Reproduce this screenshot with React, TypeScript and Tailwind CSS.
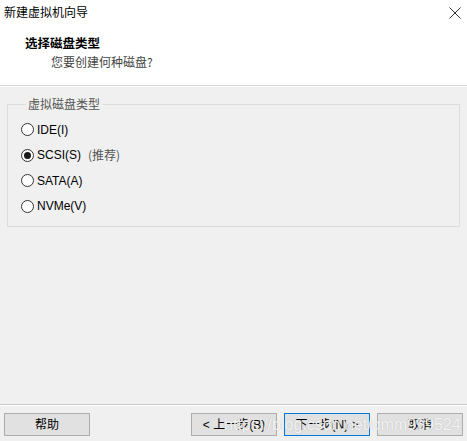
import React from "react";

const cjk = '"Noto Sans CJK SC", "Liberation Sans", sans-serif';
const latin = '"Liberation Sans", "Noto Sans CJK SC", sans-serif';

function Radio({ checked, label, hint }: { checked?: boolean; label: string; hint?: string }) {
  return (
    <div className="flex h-[25.5px] items-center">
      <span className="flex h-[13px] w-[13px] items-center justify-center rounded-full border border-[#333333] bg-white">
        {checked && <span className="h-[7px] w-[7px] rounded-full bg-[#1a1a1a]" />}
      </span>
      <span className="ml-[3px] text-[12px] text-black" style={{ fontFamily: latin }}>
        {label}
      </span>
      {hint && (
        <span className="ml-[7px] text-[12px] text-[#555555]" style={{ fontFamily: cjk }}>
          {hint}
        </span>
      )}
    </div>
  );
}

function Button({ children, primary }: { children: React.ReactNode; primary?: boolean }) {
  return (
    <button
      className={
        "flex h-[23px] w-[86px] items-center justify-center bg-[#e1e1e1] text-[12px] text-black " +
        (primary ? "border border-[#0078d7]" : "border border-[#adadad]")
      }
      style={{ fontFamily: latin }}
    >
      {children}
    </button>
  );
}

export default function App() {
  return (
    <div className="relative flex h-[441px] w-[467px] flex-col overflow-hidden bg-[#f0f0f0]" style={{ fontFamily: cjk }}>
      <div className="h-[86px] border-b border-[#d7d7d7] bg-white">
        <div className="flex h-[24px] items-center justify-between pl-[4px] pr-[6px]">
          <span className="text-[12px] leading-[16px] text-black">新建虚拟机向导</span>
          <svg width="12" height="12" viewBox="0 0 12 12" className="mt-[1px]">
            <path d="M0.5 0.5 L11.5 11.5 M11.5 0.5 L0.5 11.5" stroke="#333" strokeWidth="1" />
          </svg>
        </div>
        <div className="mt-[11px] pl-[25px] text-[12.5px] font-bold leading-[15px] text-black">选择磁盘类型</div>
        <div className="mt-[4px] pl-[51px] text-[12px] leading-[15px] text-[#444444]">您要创建何种磁盘?</div>
      </div>

      <div className="h-[1px] bg-white" />

      <fieldset className="mx-[7px] mt-[9px] h-[131px] border border-[#dcdcdc] pl-[13px] pt-[5px]">
        <legend className="ml-[5px] px-[2px] text-[12px] leading-[16px] text-[#555555]">虚拟磁盘类型</legend>
        <Radio label="IDE(I)" />
        <Radio label="SCSI(S)" hint="(推荐)" checked />
        <Radio label="SATA(A)" />
        <Radio label="NVMe(V)" />
      </fieldset>

      <div className="flex-1" />

      <div className="h-[1px] bg-[#c9c9c9]" />
      <div className="h-[1px] bg-white" />
      <div className="flex h-[35px] items-start pl-[4px] pr-[4px] pt-[7px]">
        <Button>帮助</Button>
        <div className="flex-1" />
        <Button>&lt; 上一步(B)</Button>
        <div className="w-[7px]" />
        <Button primary>下一步(N) &gt;</Button>
        <div className="w-[7px]" />
        <Button>取消</Button>
      </div>

      <div
        className="pointer-events-none absolute left-[224px] top-[416px] text-[16px] leading-[18px] text-white/85"
        style={{ fontFamily: latin, textShadow: "0 0 1px rgba(120,120,120,0.5)" }}
      >
        https://blog.csdn.net/qmm959524
      </div>
    </div>
  );
}
